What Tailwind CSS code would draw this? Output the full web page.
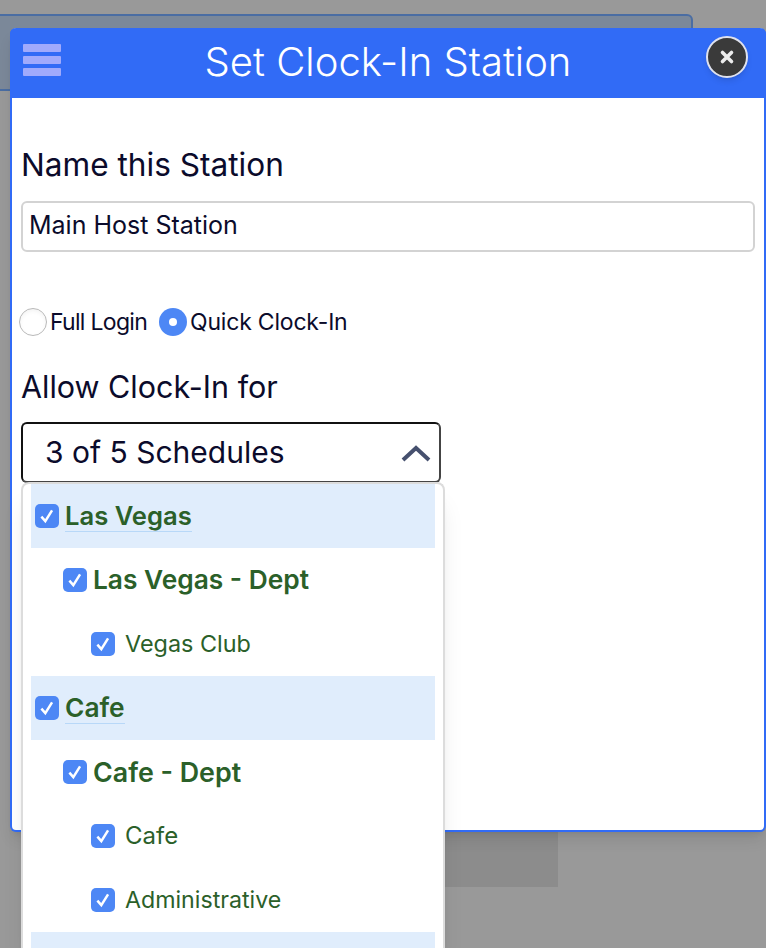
<!DOCTYPE html>
<html lang="en">
<head>
    <meta charset="UTF-8">
    <meta name="viewport" content="width=device-width, initial-scale=1.0">
    <title>Set Clock-In Station</title>
    <script src="https://cdn.jsdelivr.net/npm/@tailwindcss/browser@4"></script>
</head>
<body class="relative h-[948px] w-[766px] overflow-hidden bg-[#999999] font-['Inter','Liberation_Sans',sans-serif] text-[#0b0b2b]">

<!-- page behind the overlay -->
<div class="ml-[-10px] mt-[14px] h-[77px] w-[703px] rounded-md border-2 border-[#4a6da3] bg-[#7b8899]"></div>
<div class="ml-[440px] mt-[739px] h-[57px] w-[118px] bg-[#8c8c8c]"></div>

<!-- modal -->
<div class="absolute left-[10px] top-[28px] h-[804px] w-[756px] rounded-md border-2 border-t-0 border-[#316bf6] bg-white shadow-lg">
    <div class="relative ml-[-2px] mr-[-2px] flex h-[70px] items-center justify-center rounded-t-md bg-[#316bf6]">
        <div class="absolute left-[13px] top-[16px] flex w-[38px] flex-col gap-[4px] blur-[0.5px]">
            <span class="h-[8px] rounded-[1px] bg-[#a0aafc]"></span>
            <span class="h-[8px] rounded-[1px] bg-[#a0aafc]"></span>
            <span class="h-[8px] rounded-[1px] bg-[#a0aafc]"></span>
        </div>
        <h1 class="pb-[2px] text-[40px] font-light leading-none text-white">Set Clock-In Station</h1>
        <button class="absolute left-[696px] top-[8px] flex h-[42px] w-[42px] items-center justify-center rounded-full border-2 border-[#dfe2ee] bg-[#3a3a3a] shadow-md blur-[0.4px]">
            <svg class="h-[16px] w-[16px]" viewBox="0 0 16 16" fill="none" stroke="#ececec" stroke-width="3.6" stroke-linecap="round"><path d="M3.5 3.5l9 9M12.5 3.5l-9 9"/></svg>
        </button>
    </div>

    <div class="pl-[9px] pr-[10px]">
        <label class="mt-[48px] block text-[31.6px] leading-[38px]">Name this Station</label>
        <div class="mt-[17px] flex h-[51px] w-[734px] items-center rounded-md border-2 border-[#d3d3d3] px-[6px] pb-[2px] text-[25px]">Main Host Station</div>

        <div class="ml-[-2px] mt-[55px] flex h-[30px] items-center text-[23px]">
            <span class="h-[28px] w-[28px] rounded-full border border-[#b9b9b9] shadow-inner"></span>
            <span class="ml-[3px] tracking-[-0.7px]">Full Login</span>
            <span class="ml-[12px] flex h-[28px] w-[28px] items-center justify-center rounded-full bg-[#4d87f5]">
                <span class="h-[8px] w-[8px] rounded-full bg-white"></span>
            </span>
            <span class="ml-[3px] tracking-[-0.2px]">Quick Clock-In</span>
        </div>

        <label class="mt-[31px] block text-[30.5px] leading-[38px]">Allow Clock-In for</label>
        <div class="mt-[16px] flex h-[61px] w-[420px] items-center justify-between rounded-md border-2 border-[#111111] border-r-[#444] border-b-[#444] pl-[22px] pr-[8px] text-[30px]">
            <span>3 of 5 Schedules</span>
            <svg class="h-[18px] w-[30px]" viewBox="0 0 30 18" fill="none" stroke="#46506e" stroke-width="4"><path d="M2 16L15 4l13 12"/></svg>
        </div>
    </div>
</div>

<!-- schedules dropdown -->
<div class="absolute left-[21px] top-[482px] h-[466px] w-[424px] overflow-hidden rounded-t-lg border-x-2 border-t-2 border-[#dcdcdc] bg-white pl-[8px] pr-[8px] shadow-xl">
    <div class="flex h-[64px] items-center bg-[#e0edfc] pl-[4px]">
        <span class="flex h-[24px] w-[24px] items-center justify-center rounded-[5px] bg-[#4d87f5]"><svg class="h-[18px] w-[18px]" viewBox="0 0 16 16" fill="none" stroke="white" stroke-width="2.2"><path d="M3 8.5l3.5 4L12.5 3"/></svg></span>
        <span class="ml-[6px] border-b border-[#b8d8f8] text-[25.6px] font-semibold leading-[30px] text-[#2b6029]">Las Vegas</span>
    </div>
    <div class="flex h-[64px] items-center pl-[32px]">
        <span class="flex h-[24px] w-[24px] items-center justify-center rounded-[5px] bg-[#4d87f5]"><svg class="h-[18px] w-[18px]" viewBox="0 0 16 16" fill="none" stroke="white" stroke-width="2.2"><path d="M3 8.5l3.5 4L12.5 3"/></svg></span>
        <span class="ml-[6px] text-[26.3px] font-semibold leading-[30px] text-[#2b6029]">Las Vegas - Dept</span>
    </div>
    <div class="flex h-[64px] items-center pl-[60px]">
        <span class="flex h-[24px] w-[24px] items-center justify-center rounded-[5px] bg-[#4d87f5]"><svg class="h-[18px] w-[18px]" viewBox="0 0 16 16" fill="none" stroke="white" stroke-width="2.2"><path d="M3 8.5l3.5 4L12.5 3"/></svg></span>
        <span class="ml-[10px] text-[23.4px] leading-[30px] text-[#2b6029]">Vegas Club</span>
    </div>
    <div class="flex h-[64px] items-center bg-[#e0edfc] pl-[4px]">
        <span class="flex h-[24px] w-[24px] items-center justify-center rounded-[5px] bg-[#4d87f5]"><svg class="h-[18px] w-[18px]" viewBox="0 0 16 16" fill="none" stroke="white" stroke-width="2.2"><path d="M3 8.5l3.5 4L12.5 3"/></svg></span>
        <span class="ml-[6px] border-b border-[#b8d8f8] text-[26.3px] font-semibold leading-[30px] text-[#2b6029]">Cafe</span>
    </div>
    <div class="flex h-[64px] items-center pl-[32px]">
        <span class="flex h-[24px] w-[24px] items-center justify-center rounded-[5px] bg-[#4d87f5]"><svg class="h-[18px] w-[18px]" viewBox="0 0 16 16" fill="none" stroke="white" stroke-width="2.2"><path d="M3 8.5l3.5 4L12.5 3"/></svg></span>
        <span class="ml-[6px] text-[26.8px] font-semibold leading-[30px] text-[#2b6029]">Cafe - Dept</span>
    </div>
    <div class="flex h-[64px] items-center pl-[60px]">
        <span class="flex h-[24px] w-[24px] items-center justify-center rounded-[5px] bg-[#4d87f5]"><svg class="h-[18px] w-[18px]" viewBox="0 0 16 16" fill="none" stroke="white" stroke-width="2.2"><path d="M3 8.5l3.5 4L12.5 3"/></svg></span>
        <span class="ml-[10px] text-[24px] leading-[30px] text-[#2b6029]">Cafe</span>
    </div>
    <div class="flex h-[64px] items-center pl-[60px]">
        <span class="flex h-[24px] w-[24px] items-center justify-center rounded-[5px] bg-[#4d87f5]"><svg class="h-[18px] w-[18px]" viewBox="0 0 16 16" fill="none" stroke="white" stroke-width="2.2"><path d="M3 8.5l3.5 4L12.5 3"/></svg></span>
        <span class="ml-[10px] text-[23.2px] leading-[30px] text-[#2b6029]">Administrative</span>
    </div>
    <div class="h-[64px] bg-[#e0edfc]"></div>
</div>
</body>
</html>
